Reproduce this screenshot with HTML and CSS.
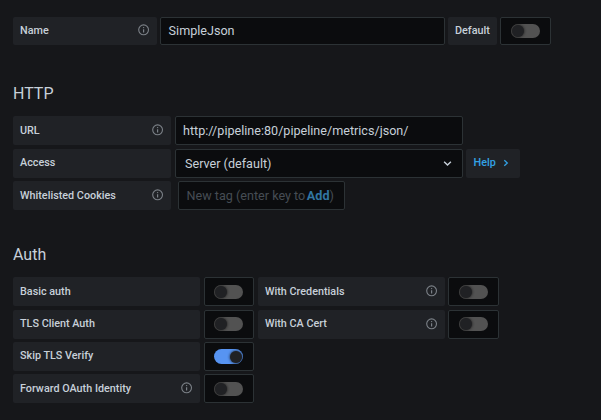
FILE: index.html
```html
<!DOCTYPE html>
<html lang="en">
<head>
<meta charset="utf-8">
<title>Data source settings</title>
<link rel="stylesheet" href="styles.css">
</head>
<body>
<svg class="defs" width="0" height="0" aria-hidden="true">
  <symbol id="info" viewBox="0 0 12 12">
    <circle cx="5.6" cy="5.8" r="4.9" fill="none" stroke="currentColor" stroke-width="1.1"/>
    <path d="M5.6 5.2V8.4" stroke="currentColor" stroke-width="1.2"/>
    <circle cx="5.6" cy="3.6" r=".7" fill="currentColor"/>
  </symbol>
</svg>
<main class="settings">
  <section class="row name-row">
    <div class="label name-label"><span>Name</span><svg class="info"><use href="#info"/></svg></div>
    <div class="field name-field">SimpleJson</div>
    <div class="label default-label">Default</div>
    <div class="switch-box wide"><span class="switch"></span></div>
  </section>

  <h3 class="heading">HTTP</h3>
  <section class="rows">
    <div class="row">
      <div class="label http-label low"><span>URL</span><svg class="info"><use href="#info"/></svg></div>
      <div class="field http-field">http://pipeline:80/pipeline/metrics/json/</div>
    </div>
    <div class="row">
      <div class="label http-label"><span>Access</span></div>
      <div class="field http-field select"><span>Server (default)</span><svg class="caret" viewBox="0 0 8 6"><path d="M1 1.5L4 4.3L7 1.5"/></svg></div>
      <div class="label help"><span>Help</span><svg class="chevron" viewBox="0 0 6 8"><path d="M1.3 1.2L4.3 4L1.3 6.8"/></svg></div>
    </div>
    <div class="row">
      <div class="label http-label low"><span>Whitelisted Cookies</span><svg class="info"><use href="#info"/></svg></div>
      <div class="field tags"><span class="placeholder">New tag (enter key to</span><span class="add">Add</span><span class="placeholder">)</span></div>
    </div>
  </section>

  <h3 class="heading auth-heading">Auth</h3>
  <section class="rows">
    <div class="row auth-row">
      <div class="label auth-label low"><span>Basic auth</span></div>
      <div class="switch-box"><span class="switch"></span></div>
      <div class="label auth-label low"><span>With Credentials</span><svg class="info"><use href="#info"/></svg></div>
      <div class="switch-box wide"><span class="switch"></span></div>
    </div>
    <div class="row auth-row">
      <div class="label auth-label"><span>TLS Client Auth</span></div>
      <div class="switch-box high"><span class="switch"></span></div>
      <div class="label auth-label"><span>With CA Cert</span><svg class="info"><use href="#info"/></svg></div>
      <div class="switch-box wide high"><span class="switch"></span></div>
    </div>
    <div class="row auth-row">
      <div class="label auth-label"><span>Skip TLS Verify</span></div>
      <div class="switch-box"><span class="switch on"></span></div>
    </div>
    <div class="row auth-row">
      <div class="label auth-label low"><span>Forward OAuth Identity</span><svg class="info"><use href="#info"/></svg></div>
      <div class="switch-box"><span class="switch"></span></div>
    </div>
  </section>
</main>
</body>
</html>
```
FILE: styles.css
```css
* { box-sizing: border-box; }
body {
  margin: 0;
  background: #16171a;
  color: #c7d0d9;
  font-family: Roboto, sans-serif;
}
.defs { display: block; }
.settings { padding: 17px 13px 0; }
.row { display: flex; height: 29px; }
.name-row { height: 28px; gap: 3px; }
.rows { display: grid; grid-template-rows: 33px 32px 32px 29px; }
.rows > .row { gap: 4px; }
.heading {
  margin: 39px 0 12px;
  height: 20px;
  font-size: 16px;
  line-height: 20px;
  font-weight: 400;
}
.rows + .auth-heading { margin-top: 3px; }
.label {
  display: flex;
  align-items: center;
  justify-content: space-between;
  flex: none;
  padding: 0 7px 2px;
  border-radius: 2px;
  background: #202226;
  font-size: 10.8px;
  font-weight: 500;
  white-space: nowrap;
}
.low { padding-bottom: 1px; }
.name-label { width: 144px; }
.default-label { width: 49px; }
.http-label { width: 158px; }
.auth-label { width: 187px; }
.info { width: 12px; height: 12px; color: #7b8087; }
.field {
  display: flex;
  align-items: center;
  flex: none;
  padding: 0 7px;
  border: 1px solid #2c3235;
  border-radius: 2px;
  background: #0b0c0e;
  font-size: 12.6px;
  white-space: pre;
}
.name-field { width: 285px; padding: 0 7.6px 1px; }
.http-field { width: 288px; }
.http-field.select { justify-content: space-between; padding: 0 10px 0 9px; }
.caret { width: 9px; height: 7px; fill: none; stroke: #c7d0d9; stroke-width: 1.3; }
.help { width: 54px; margin-left: -1px; padding-left: 7.6px; padding-right: 11px; color: #33a2e5; }
.chevron { width: 6px; height: 8px; fill: none; stroke: currentColor; stroke-width: 1.3; }
.tags { width: 167px; margin-left: 3px; padding: 0 7.6px; }
.placeholder { color: #464c54; }
.add { margin-left: 1.6px; color: #3176a3; font-weight: 700; }
.switch-box {
  display: flex;
  align-items: center;
  flex: none;
  width: 50px;
  padding-left: 9px;
  border: 1px solid #2c3235;
  border-radius: 2px;
  background: #0b0c0e;
}
.wide { width: 51px; padding-left: 10px; }
.high { padding-bottom: 1px; }
.auth-row .wide { margin-left: -1px; }
.switch {
  display: flex;
  align-items: center;
  width: 29px;
  height: 14px;
  padding: 0 1px;
  border-radius: 7px;
  background: #525252;
  overflow: hidden;
}
.switch::before {
  content: "";
  width: 12px;
  height: 12px;
  border-radius: 50%;
  background: #202124;
  box-shadow: 0 0 3px #111;
}
.switch.on { height: 15px; border-radius: 8px; justify-content: flex-end; background: #5794f2; }
```
